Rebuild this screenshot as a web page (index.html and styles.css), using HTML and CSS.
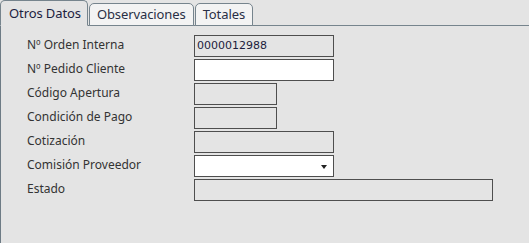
FILE: index.html
```html
<!DOCTYPE html>
<html lang="es">
<head>
    <meta charset="UTF-8">
    <title>Otros Datos</title>
    <link rel="stylesheet" href="styles.css">
</head>
<body>
    <div class="tabs">
        <div class="tab active">Otros Datos</div>
        <div class="tab">Observaciones</div>
        <div class="tab">Totales</div>
    </div>
    <div class="panel">
        <div class="form-grid">
            <label class="field-label">Nº Orden Interna</label>
            <div class="field field-md readonly">0000012988</div>

            <label class="field-label">Nº Pedido Cliente</label>
            <div class="field field-md"></div>

            <label class="field-label">Código Apertura</label>
            <div class="field field-sm readonly"></div>

            <label class="field-label">Condición de Pago</label>
            <div class="field field-sm readonly"></div>

            <label class="field-label">Cotización</label>
            <div class="field field-md readonly"></div>

            <label class="field-label">Comisión Proveedor</label>
            <div class="field field-md select"><span class="caret"></span></div>

            <label class="field-label">Estado</label>
            <div class="field field-lg readonly"></div>
        </div>
    </div>
</body>
</html>
```

FILE: styles.css
```css
body {
    margin: 0;
    padding: 0;
    background: #e4e4e4;
    font-family: "Noto Sans", "Open Sans", sans-serif;
    color: #333;
    height: 100vh;
    display: flex;
    flex-direction: column;
}
.tabs {
    display: flex;
    align-items: flex-end;
    height: 25px;
    border-bottom: 1px solid #76848d;
}
.tab {
    box-sizing: border-box;
    height: 23px;
    padding: 0 7px;
    margin-right: 1px;
    margin-bottom: -1px;
    background: #f3f3f3;
    border: 1px solid #76848d;
    border-radius: 5px 5px 0 0;
    font-size: 13px;
    letter-spacing: -0.1px;
    line-height: 21px;
    color: #2a2f45;
}
.tab.active {
    height: 26px;
    padding: 0 6px 0 8px;
    background: #e4e4e4;
    border-bottom-color: #e4e4e4;
    line-height: 24px;
    color: #1c2140;
}
.panel {
    flex: 1;
    border-left: 1px solid #6d7b85;
    padding: 9px 0 0 26px;
}
.form-grid {
    display: grid;
    grid-template-columns: 167px auto;
    grid-auto-rows: 22px;
    row-gap: 2px;
    justify-items: start;
}
.field-label {
    font-size: 12px;
    line-height: 20px;
    color: #333;
}
.field {
    box-sizing: border-box;
    height: 22px;
    border: 1px solid #4e4e4e;
    background: #fff;
    font-family: "DejaVu Sans", sans-serif;
    font-size: 11px;
    line-height: 20px;
    padding-left: 2px;
    color: #1c1c3c;
    position: relative;
}
.field.readonly {
    background: #e4e4e4;
}
.field-sm {
    width: 83px;
}
.field-md {
    width: 140px;
}
.field-lg {
    width: 299px;
}
.caret {
    position: absolute;
    right: 6px;
    top: 9px;
    border-left: 3px solid transparent;
    border-right: 3px solid transparent;
    border-top: 4px solid #222;
}
```
